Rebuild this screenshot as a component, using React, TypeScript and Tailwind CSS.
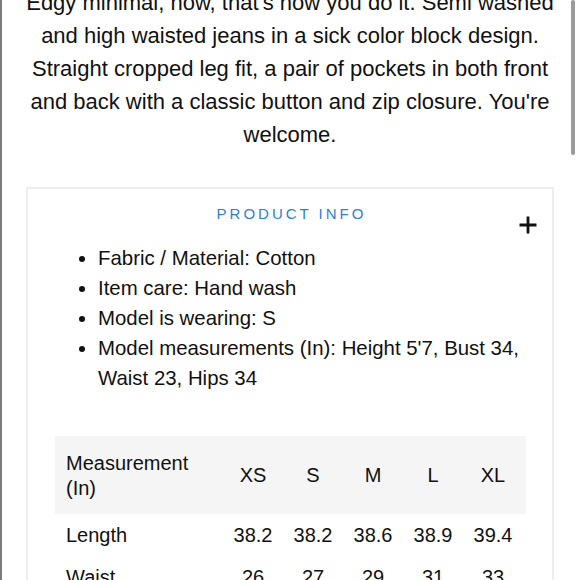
import React from "react";

const sizes = ["XS", "S", "M", "L", "XL"];
const rows: { label: string; values: string[] }[] = [
  { label: "Length", values: ["38.2", "38.2", "38.6", "38.9", "39.4"] },
  { label: "Waist", values: ["26", "27", "29", "31", "33"] },
];

export default function App() {
  return (
    <div
      className="relative w-[580px] h-[580px] overflow-hidden bg-white border-l-2 border-[#7d7d7d] text-[#111111]"
      style={{ fontFamily: '"Liberation Sans", Arial, Helvetica, sans-serif' }}
    >
      <div className="absolute right-[5px] top-0 w-[4px] h-[155px] rounded-full bg-[#9a9a9a]" />
      <div className="ml-[24px] mr-[26px]">
        <p className="mt-[-14px] text-center text-[22px] leading-[33px]">
          Edgy minimal, now, that's how you do it. Semi washed
          <br />
          and high waisted jeans in a sick color block design.
          <br />
          Straight cropped leg fit, a pair of pockets in both front
          <br />
          and back with a classic button and zip closure. You're
          <br />
          welcome.
        </p>

        <div className="mt-[36px] border-2 border-[#eeeeee] pb-[40px]">
          <div className="grid grid-cols-[1fr_auto_1fr] pt-[15px]">
            <div />
            <div className="text-[15px] leading-[20px] tracking-[3px] text-[#2f80d6] pl-[3px]">
              PRODUCT INFO
            </div>
            <div className="flex justify-end">
              <svg
                className="mt-[12px] mr-[15px]"
                width="18"
                height="18"
                viewBox="0 0 18 18"
              >
                <path d="M9 0.5V17.5M0.5 9H17.5" stroke="#111" strokeWidth="2.8" />
              </svg>
            </div>
          </div>

          <ul className="mt-[9px] list-disc pl-[70px] pr-[20px] text-[20.4px] leading-[30px]">
            <li>Fabric / Material: Cotton</li>
            <li>Item care: Hand wash</li>
            <li>Model is wearing: S</li>
            <li>Model measurements (In): Height 5'7, Bust 34, Waist 23, Hips 34</li>
          </ul>

          <div className="mt-[43px] ml-[27px] mr-[26px]">
            <table className="w-full border-collapse text-[20px]">
              <colgroup>
                <col />
                <col className="w-[60px]" />
                <col className="w-[60px]" />
                <col className="w-[60px]" />
                <col className="w-[60px]" />
                <col className="w-[63px]" />
              </colgroup>
              <thead>
                <tr className="bg-[#f5f5f5]">
                  <th className="text-left font-normal pl-[11px] pt-[15px] pb-[13px] leading-[25px] align-middle">
                    Measurement
                    <br />
                    (In)
                  </th>
                  {sizes.map((s, i) => (
                    <th
                      key={s}
                      className={
                        i === 4
                          ? "font-normal text-center align-middle pr-[3px]"
                          : "font-normal text-center align-middle"
                      }
                    >
                      {s}
                    </th>
                  ))}
                </tr>
              </thead>
              <tbody>
                {rows.map((r) => (
                  <tr key={r.label}>
                    <td className="pl-[11px] py-[10px] leading-[22px]">{r.label}</td>
                    {r.values.map((v, i) => (
                      <td
                        key={i}
                        className={
                          i === 4
                            ? "text-center py-[10px] leading-[22px] pr-[3px]"
                            : "text-center py-[10px] leading-[22px]"
                        }
                      >
                        {v}
                      </td>
                    ))}
                  </tr>
                ))}
              </tbody>
            </table>
          </div>
        </div>
      </div>
    </div>
  );
}
